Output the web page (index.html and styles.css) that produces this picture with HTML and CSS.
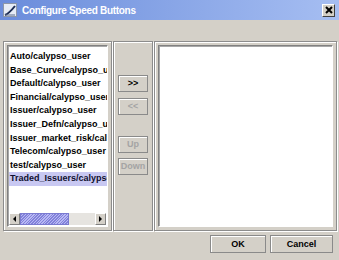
FILE: index.html
```html
<!DOCTYPE html>
<html>
<head>
<meta charset="utf-8">
<link rel="stylesheet" href="styles.css">
</head>
<body>
<div class="window">
  <div class="titlebar">
    <svg class="app-icon" width="14" height="14" viewBox="0 0 14 14">
      <rect x="0.5" y="0.5" width="13" height="13" fill="#e6ecf6" stroke="#8c96a8"/>
      <path d="M2 12 C5 11 8 8 12 3" stroke="#1c2c54" stroke-width="2" fill="none"/>
      <path d="M2 12 L12 12" stroke="#5a6a8a" stroke-width="1"/>
    </svg>
    <span class="title">Configure Speed Buttons</span>
    <div class="close">
      <svg width="8" height="8" viewBox="0 0 8 8">
        <path d="M1 1 L7 7 M7 1 L1 7" stroke="#000" stroke-width="2"/>
      </svg>
    </div>
  </div>
  <div class="content">
    <div class="panel left">
      <div class="listbox">
        <ul class="items">
          <li>Auto/calypso_user</li>
          <li>Base_Curve/calypso_user</li>
          <li>Default/calypso_user</li>
          <li>Financial/calypso_user</li>
          <li>Issuer/calypso_user</li>
          <li>Issuer_Defn/calypso_user</li>
          <li>Issuer_market_risk/calypso_user</li>
          <li>Telecom/calypso_user</li>
          <li>test/calypso_user</li>
          <li class="selected">Traded_Issuers/calypso_user</li>
        </ul>
        <div class="hscroll">
          <div class="arrow"><span class="tri-left"></span></div>
          <div class="thumb"></div>
          <div class="track"></div>
          <div class="arrow"><span class="tri-right"></span></div>
        </div>
      </div>
    </div>
    <div class="panel mid">
      <div class="btn small">&gt;&gt;</div>
      <div class="btn small disabled gap-a">&lt;&lt;</div>
      <div class="btn small disabled gap-b">Up</div>
      <div class="btn small disabled gap-c">Down</div>
    </div>
    <div class="panel right">
      <div class="listbox"></div>
    </div>
  </div>
  <div class="footer">
    <div class="btn ok">OK</div>
    <div class="btn cancel">Cancel</div>
  </div>
</div>
</body>
</html>
```
FILE: styles.css
```css
* { box-sizing: border-box; }
html, body {
  margin: 0;
  padding: 0;
  background: #d4d0c8;
}
body {
  width: 339px;
  height: 260px;
  overflow: hidden;
  font-family: "Liberation Sans", Arial, sans-serif;
  font-weight: bold;
  font-size: 9px;
  color: #000;
}
.window {
  width: 339px;
  height: 260px;
  display: flex;
  flex-direction: column;
}
.titlebar {
  height: 20px;
  background: linear-gradient(to right, #6a8cdb, #a6bef2);
  display: flex;
  align-items: center;
  padding-left: 3px;
  padding-right: 4px;
}
.app-icon { flex: none; }
.title {
  color: #fff;
  font-size: 10px;
  margin-left: 5px;
  flex: 1;
  letter-spacing: -0.3px;
}
.close {
  width: 13px;
  height: 13px;
  background: #d4d0c8;
  border: 1px solid;
  border-color: #fff #404040 #404040 #fff;
  display: flex;
  align-items: center;
  justify-content: center;
}
.content {
  display: flex;
  gap: 1px;
  margin-top: 21px;
  padding-left: 3px;
  height: 190px;
}
.panel {
  border: 1px solid #8c8c8c;
  box-shadow: inset 1px 1px 0 #fff, 1px 1px 0 #fff;
  height: 190px;
}
.left { width: 109px; padding: 3px; }
.mid {
  width: 40px;
  padding-top: 33px;
  display: flex;
  flex-direction: column;
  align-items: center;
}
.right { width: 183px; padding: 3px; }
.listbox {
  height: 100%;
  background: #fff;
  border: 1px solid;
  border-color: #808080 #fff #fff #808080;
  box-shadow: inset 1px 1px 0 #a8a8a8;
  display: flex;
  flex-direction: column;
  overflow: hidden;
}
.items {
  list-style: none;
  margin: 0;
  padding: 4px 0 0 1px;
  flex: 1;
  overflow: hidden;
}
.items li {
  height: 13.6px;
  line-height: 13.6px;
  white-space: nowrap;
  padding-left: 1px;
}
.items li.selected {
  background: #c8c8f2;
  color: #101030;
}
.hscroll {
  height: 12px;
  display: flex;
  margin: 0 1px 1px 1px;
}
.arrow {
  width: 11px;
  height: 12px;
  background: #d4d0c8;
  border: 1px solid;
  border-color: #fff #808080 #808080 #fff;
  display: flex;
  align-items: center;
  justify-content: center;
}
.tri-left {
  width: 0; height: 0;
  border-top: 3px solid transparent;
  border-bottom: 3px solid transparent;
  border-right: 3px solid #000;
}
.tri-right {
  width: 0; height: 0;
  border-top: 3px solid transparent;
  border-bottom: 3px solid transparent;
  border-left: 3px solid #000;
}
.thumb {
  width: 49px;
  background: repeating-linear-gradient(135deg, #8282da 0 1px, #b8b8f4 1px 2px);
  border: 1px solid #7a7ad0;
}
.track {
  flex: 1;
  background: #e6e4e0;
}
.btn {
  display: flex;
  align-items: center;
  justify-content: center;
  line-height: 1;
  background: #d4d0c8;
  border: 1px solid #8a8a8a;
  box-shadow: inset 1px 1px 0 #fff;
}
.small { width: 30px; height: 17px; }
.disabled { color: #a4a4a4; }
.gap-a { margin-top: 6px; }
.gap-b { margin-top: 21px; }
.gap-c { margin-top: 5px; }
.footer {
  display: flex;
  justify-content: flex-end;
  gap: 4px;
  padding-top: 4px;
  padding-right: 6px;
}
.ok { width: 56px; height: 18px; }
.cancel { width: 63px; height: 18px; }
```
